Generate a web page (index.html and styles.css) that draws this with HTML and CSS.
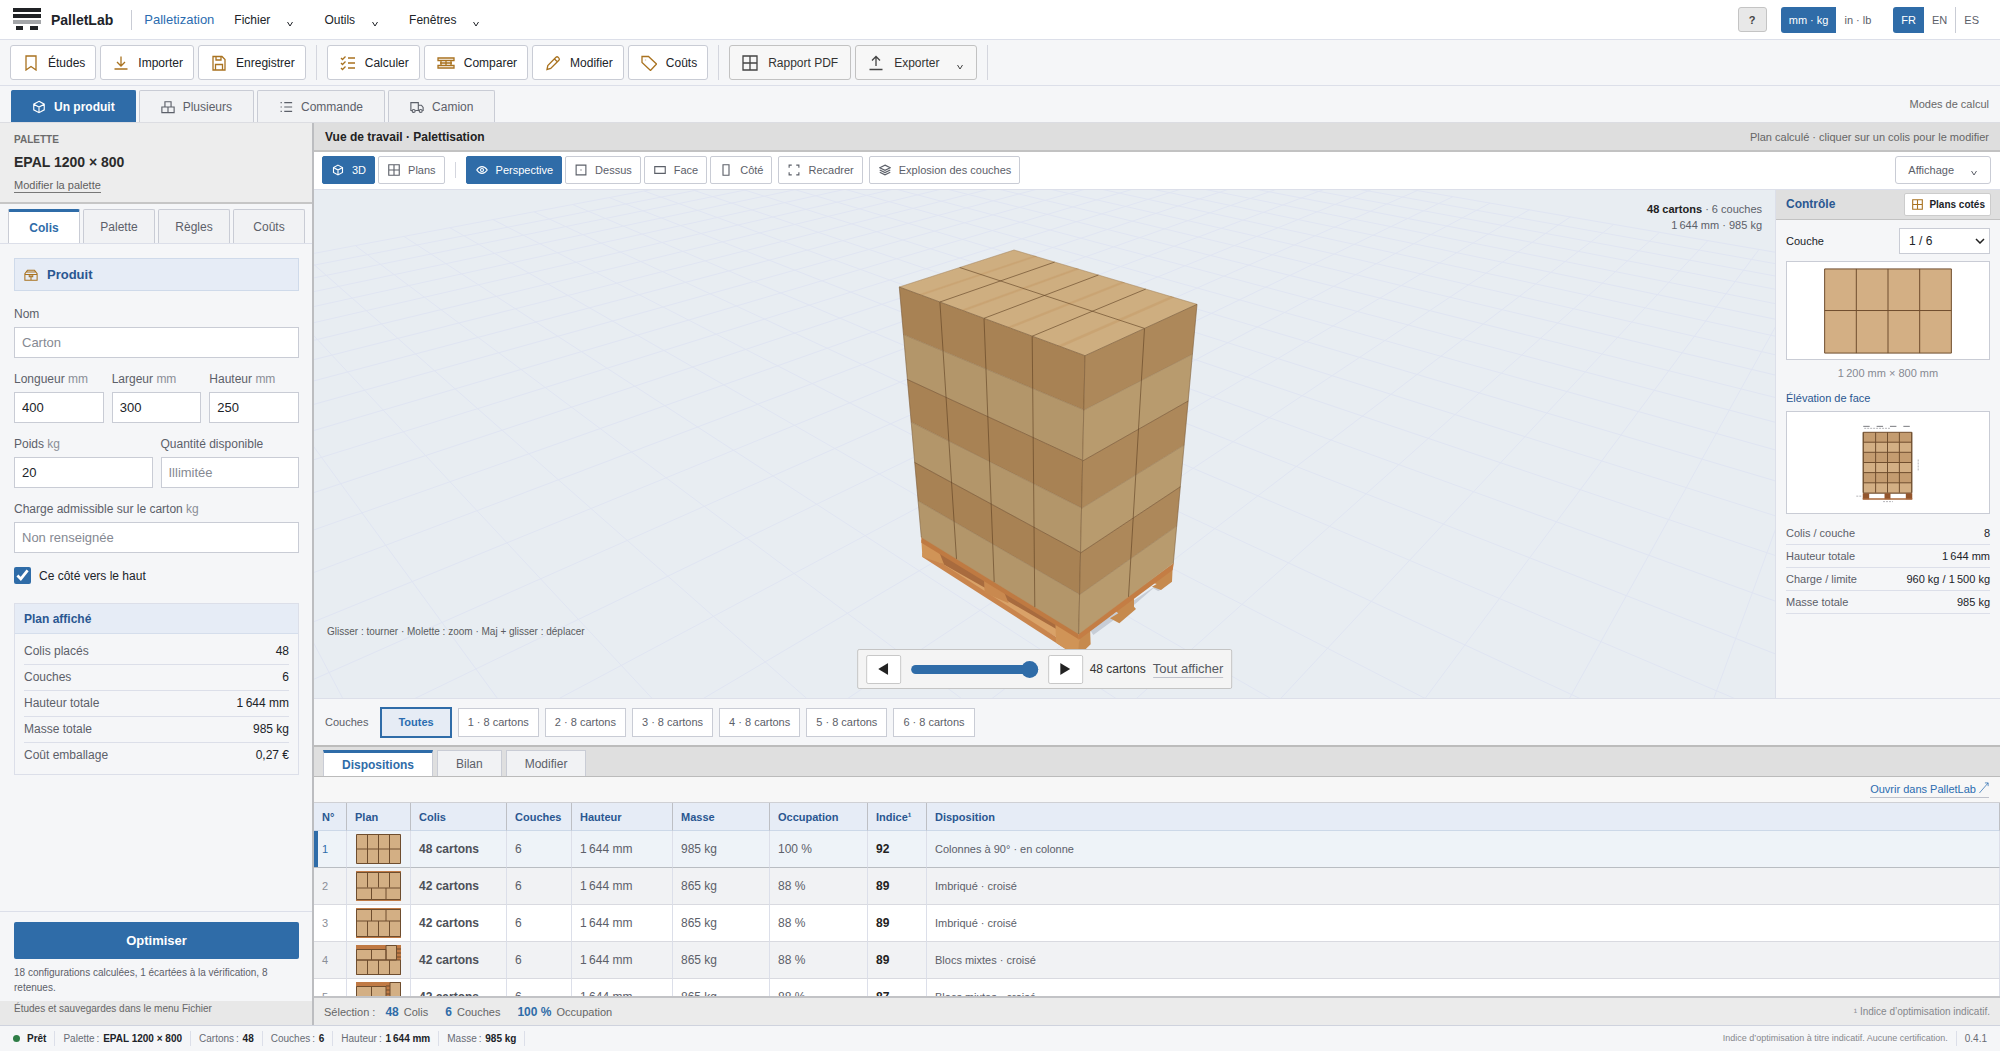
FILE: index.html
```html
<!DOCTYPE html>
<html lang="fr">
<head>
<meta charset="utf-8">
<meta name="viewport" content="width=device-width, initial-scale=1">
<title>PalletLab · Palletization</title>
<link rel="stylesheet" href="styles.css">
</head>
<body>
<svg class="sprite" aria-hidden="true">
  <symbol id="i-bookmark" viewBox="0 0 16 16"><path d="M3 1h10v14l-5-3.500L3 15z"/></symbol>
  <symbol id="i-import" viewBox="0 0 16 16"><path d="M8 1.500v9M4 7l4 4 4-4M1.500 14h13"/></symbol>
  <symbol id="i-save" viewBox="0 0 16 16"><path d="M2 1.500h9L14 4.500V15H2zM5 1.500V5h5V1.500M4.500 15V9.500h7V15"/></symbol>
  <symbol id="i-checks" viewBox="0 0 16 16"><path d="M1 3l1.500 1.500L5.500 1.500M1 8l1.500 1.500 3-3M1 13l1.500 1.500 3-3M8 3h7M8 8h7M8 13h7"/></symbol>
  <symbol id="i-compare" viewBox="0 0 18 16"><path d="M1 3h16v2.500H1zM1 10.500h16V13H1zM4 5.500v5M9 5.500v5M14 5.500v5M3 8h12"/></symbol>
  <symbol id="i-pencil" viewBox="0 0 16 16"><path d="M2 14.500l.8-4L11 2.300a1.500 1.500 0 0 1 2.100 0l.8.800a1.500 1.500 0 0 1 0 2.100L5.700 13.500zM9.500 4l2.800 2.800"/></symbol>
  <symbol id="i-tag" viewBox="0 0 16 16"><path d="M1 1.500h6.500L15.500 9l-6 6.500L1 7.500zM4.500 4.700v.5"/></symbol>
  <symbol id="i-grid" viewBox="0 0 16 16"><path d="M1 1h14v14H1zM8 1v14M1 8h14"/></symbol>
  <symbol id="i-export" viewBox="0 0 16 16"><path d="M8 11V2M4 5.500l4-4 4 4M1.500 14.500h13"/></symbol>
  <symbol id="i-cube" viewBox="0 0 16 16"><path d="M8 1.500l6 3.300v6.400l-6 3.300-6-3.300V4.800zM2 4.800L8 8l6-3.200M8 8v6.500"/></symbol>
  <symbol id="i-boxes" viewBox="0 0 16 16"><path d="M4.500 2h7v6h-7zM1 8h7v6.500H1zM8 8h7v6.500H8z"/></symbol>
  <symbol id="i-list" viewBox="0 0 16 16"><path d="M6 3h9M6 8h9M6 13h9M1.800 3h1.400M1.800 8h1.400M1.800 13h1.400"/></symbol>
  <symbol id="i-truck" viewBox="0 0 16 16"><path d="M2.500 12H1V3h8.500v9H6M9.500 6H13l2 2.500V12h-1M9.500 12h1"/><circle cx="4.200" cy="12.500" r="1.700"/><circle cx="12.200" cy="12.500" r="1.700"/></symbol>
  <symbol id="i-eye" viewBox="0 0 16 16"><path d="M1 8c2-3 4.300-4.500 7-4.500S13 5 15 8c-2 3-4.300 4.500-7 4.500S3 11 1 8z"/><circle cx="8" cy="8" r="2"/></symbol>
  <symbol id="i-top" viewBox="0 0 16 16"><path d="M1.500 1.500h13v13h-13zM7.200 8h1.600"/></symbol>
  <symbol id="i-front" viewBox="0 0 16 16"><path d="M1 3.500h14v9H1z"/></symbol>
  <symbol id="i-side" viewBox="0 0 16 16"><path d="M4 1h8v14H4z"/></symbol>
  <symbol id="i-frame" viewBox="0 0 16 16"><path d="M1.500 5V1.500H5M11 1.500h3.500V5M14.500 11v3.500H11M5 14.500H1.500V11"/></symbol>
  <symbol id="i-layers" viewBox="0 0 16 16"><path d="M8 1.500L15 5 8 8.500 1 5zM1 8l7 3.500L15 8M1 11l7 3.500 7-3.500"/></symbol>
  <symbol id="i-carton" viewBox="0 0 16 16"><path d="M4 2.500h8L15 6.500V14H1V6.500zM1 7.500h14M3 4.500h10M8 7.500V14M6 7.500V10h4V7.500"/></symbol>
  <symbol id="i-chev" viewBox="0 0 8 8"><path d="M1.500 2L4 6l2.500-4"/></symbol>
</svg>

<div class="app">
  <header class="menubar">
    <svg class="logo" viewBox="0 0 28 24" aria-hidden="true"><path fill="#202225" d="M0 0h28v4H0zM0 6h28v4H0zM3 18h7v4H3zM17 18h8v4h-8z"/><path fill="#a3a5a8" d="M0 12h28v4H0z"/></svg>
    <strong class="brand">PalletLab</strong>
    <span class="product">Palletization</span>
    <nav class="menus">
      <button type="button">Fichier<svg class="chev"><use href="#i-chev"/></svg></button>
      <button type="button">Outils<svg class="chev"><use href="#i-chev"/></svg></button>
      <button type="button">Fenêtres<svg class="chev"><use href="#i-chev"/></svg></button>
    </nav>
    <button type="button" class="help" aria-label="Aide">?</button>
    <div class="switch units"><button type="button" class="on">mm · kg</button><button type="button">in · lb</button></div>
    <div class="switch langs"><button type="button" class="on">FR</button><button type="button">EN</button><button type="button" class="ruled">ES</button></div>
  </header>

  <div class="toolbar">
    <button type="button" class="tool"><svg><use href="#i-bookmark"/></svg>Études</button>
    <button type="button" class="tool"><svg><use href="#i-import"/></svg>Importer</button>
    <button type="button" class="tool"><svg><use href="#i-save"/></svg>Enregistrer</button>
    <span class="rule"></span>
    <button type="button" class="tool"><svg><use href="#i-checks"/></svg>Calculer</button>
    <button type="button" class="tool"><svg class="wide"><use href="#i-compare"/></svg>Comparer</button>
    <button type="button" class="tool"><svg><use href="#i-pencil"/></svg>Modifier</button>
    <button type="button" class="tool"><svg><use href="#i-tag"/></svg>Coûts</button>
    <span class="rule"></span>
    <button type="button" class="tool plain"><svg><use href="#i-grid"/></svg>Rapport PDF</button>
    <button type="button" class="tool plain"><svg><use href="#i-export"/></svg>Exporter<svg class="chev"><use href="#i-chev"/></svg></button>
    <span class="rule"></span>
  </div>

  <div class="modes">
    <button type="button" class="mode on"><svg><use href="#i-cube"/></svg>Un produit</button>
    <button type="button" class="mode"><svg><use href="#i-boxes"/></svg>Plusieurs</button>
    <button type="button" class="mode"><svg><use href="#i-list"/></svg>Commande</button>
    <button type="button" class="mode"><svg><use href="#i-truck"/></svg>Camion</button>
    <span class="modes-note">Modes de calcul</span>
  </div>

  <div class="body">
    <aside class="side">
      <section class="pallet-head">
        <span class="over">PALETTE</span>
        <strong>EPAL 1200 × 800</strong>
        <a href="#palette">Modifier la palette</a>
      </section>
      <div class="side-tabs">
        <button type="button" class="on">Colis</button><button type="button">Palette</button><button type="button">Règles</button><button type="button">Coûts</button>
      </div>
      <form class="form">
        <h2><svg><use href="#i-carton"/></svg>Produit</h2>
        <div class="field"><label for="nom">Nom</label><input id="nom" type="text" placeholder="Carton"></div>
        <div class="fields">
          <div class="field"><label for="lon">Longueur <small>mm</small></label><input id="lon" type="text" value="400"></div>
          <div class="field"><label for="lar">Largeur <small>mm</small></label><input id="lar" type="text" value="300"></div>
          <div class="field"><label for="hau">Hauteur <small>mm</small></label><input id="hau" type="text" value="250"></div>
        </div>
        <div class="fields">
          <div class="field"><label for="poi">Poids <small>kg</small></label><input id="poi" type="text" value="20"></div>
          <div class="field"><label for="qte">Quantité disponible</label><input id="qte" type="text" placeholder="Illimitée"></div>
        </div>
        <div class="field"><label for="chg">Charge admissible sur le carton <small>kg</small></label><input id="chg" type="text" placeholder="Non renseignée"></div>
        <label class="check"><input type="checkbox" checked>Ce côté vers le haut</label>
        <section class="summary">
          <h3>Plan affiché</h3>
          <dl class="stats">
            <div><dt>Colis placés</dt><dd>48</dd></div>
            <div><dt>Couches</dt><dd>6</dd></div>
            <div><dt>Hauteur totale</dt><dd>1&#8239;644 mm</dd></div>
            <div><dt>Masse totale</dt><dd>985 kg</dd></div>
            <div><dt>Coût emballage</dt><dd>0,27 €</dd></div>
          </dl>
        </section>
      </form>
      <div class="side-foot">
        <button type="button" class="primary">Optimiser</button>
        <p>18 configurations calculées, 1 écartées à la vérification, 8 retenues.</p>
      </div>
      <p class="side-note">Études et sauvegardes dans le menu Fichier</p>
    </aside>

    <main class="main">
      <div class="work-head"><h1>Vue de travail · Palettisation</h1><span>Plan calculé · cliquer sur un colis pour le modifier</span></div>
      <div class="viewbar">
        <button type="button" class="on"><svg><use href="#i-cube"/></svg>3D</button>
        <button type="button"><svg><use href="#i-grid"/></svg>Plans</button>
        <span class="rule"></span>
        <button type="button" class="on"><svg><use href="#i-eye"/></svg>Perspective</button>
        <button type="button"><svg><use href="#i-top"/></svg>Dessus</button>
        <button type="button"><svg><use href="#i-front"/></svg>Face</button>
        <button type="button"><svg><use href="#i-side"/></svg>Côté</button>
        <button type="button" class="apart"><svg><use href="#i-frame"/></svg>Recadrer</button>
        <button type="button" class="apart"><svg><use href="#i-layers"/></svg>Explosion des couches</button>
        <button type="button" class="display">Affichage<svg class="chev"><use href="#i-chev"/></svg></button>
      </div>

      <div class="stage">
        <div class="view">
          <svg class="scene" viewBox="0 0 1461 508" preserveAspectRatio="xMidYMid slice" role="img" aria-label="Palette chargée en perspective">
            <path id="floor" fill="none" stroke="#e0e5f2" stroke-width="1"/>
            <g transform="translate(546 40) scale(.33333)">
              <path fill="#c7cdd6" d="M690 1200L935 1035 905 1078 830 1120 700 1215z"/>
              <path fill="#e8edf2" d="M770 1170L880 1075 905 1090 830 1140z"/>
              <path fill="#a86b3e" d="M184 930L656 1215V1250L250 1010z"/>
              <path fill="#d9a268" d="M250 1003L372 1072 590 1198V1222L430 1128 240 1010z"/>
              <path fill="#c9854d" d="M187 968L250 1003 590 1222 640 1262H625L187 981z"/>
              <path fill="#d09457" d="M184 930L236 962 252 1003 187 980z"/>
              <path fill="#c9894f" d="M372 1050L432 1085 446 1120 374 1088z"/>
              <path fill="#d09457" d="M586 1170L658 1215V1262H625L588 1238z"/>
              <path fill="#c68a4e" d="M658 1222L690 1190 692 1243 672 1262H655z"/>
              <path fill="#c68a4e" d="M762 1140L822 1098V1130L828 1137 778 1180 750 1165 775 1150z"/>
              <path fill="#c68a4e" d="M878 1058L938 1012 936 1055 903 1080 876 1070 890 1062z"/>
              <path fill="#bf7a42" d="M184 918L656 1210 656 1228 184 938z"/>
              <path fill="#c47d44" d="M656 1206L942 998 938 1020 656 1230z"/>
            </g>
            <g id="load"></g>
          </svg>
          <p class="readout"><strong>48 cartons</strong> · 6 couches<br>1&#8239;644 mm · 985 kg</p>
          <p class="hint">Glisser : tourner · Molette : zoom · Maj + glisser : déplacer</p>
          <div class="player">
            <button type="button" aria-label="Précédent"><svg viewBox="0 0 10 12"><path d="M10 0v12L0 6z"/></svg></button>
            <input type="range" min="0" max="48" value="48" aria-label="Cartons affichés">
            <button type="button" aria-label="Suivant"><svg viewBox="0 0 10 12"><path d="M0 0v12l10-6z"/></svg></button>
            <span>48 cartons</span>
            <a href="#tout">Tout afficher</a>
          </div>
        </div>

        <aside class="control">
          <div class="control-head"><h2>Contrôle</h2><button type="button"><svg><use href="#i-grid"/></svg>Plans cotés</button></div>
          <div class="control-body">
            <div class="pick"><label for="couche">Couche</label><span class="select"><select id="couche"><option>1 / 6</option></select><svg viewBox="0 0 10 6"><path d="M1 1l4 4 4-4"/></svg></span></div>
            <div class="figure"><svg viewBox="0 0 204 98" aria-hidden="true"><g fill="#d3af84" stroke="#6e4d2e"><path d="M38 7h128v85H38z"/><path d="M70 7v85M102 7v85M134 7v85M38 49h128"/></g></svg></div>
            <p class="caption">1&#8239;200 mm × 800 mm</p>
            <h3>Élévation de face</h3>
            <div class="figure"><svg viewBox="0 0 204 102" aria-hidden="true">
              <path d="M77 14.500h48" stroke="#77797e" stroke-width="1" stroke-dasharray="6.500 7"/>
              <path d="M78 16.500h26M132.500 48v12M70 85h6M97 90.500h10" stroke="#b4b4b8" stroke-width="1" stroke-dasharray="2 1"/>
              <path fill="#c49c70" stroke="#6e4d2e" d="M77 20.500h49v61H77z"/>
              <path fill="#d3af84" d="M77.500 31h48v10h-48zM77.500 51h48v10h-48zM77.500 71.500h48v10h-48z"/>
              <path stroke="#6e4d2e" d="M77 20.500v61M89.500 20.500v61M101.500 20.500v61M113.500 20.500v61M126 20.500v61M77 30.500h49M77 40.700h49M77 51h49M77 61.200h49M77 71.500h49M77 82h49"/>
              <path fill="#93552c" d="M76.500 82h6.500v6h-6.500zM98.500 82h6v6h-6zM120 82h6.500v6H120z"/><path fill="#a8673a" d="M76.500 87h50v1.500h-50z"/>
            </svg></div>
            <dl class="stats">
              <div><dt>Colis / couche</dt><dd>8</dd></div>
              <div><dt>Hauteur totale</dt><dd>1&#8239;644 mm</dd></div>
              <div><dt>Charge / limite</dt><dd>960 kg / 1&#8239;500 kg</dd></div>
              <div><dt>Masse totale</dt><dd>985 kg</dd></div>
            </dl>
          </div>
        </aside>
      </div>

      <div class="layers">
        <span>Couches</span>
        <button type="button" class="on">Toutes</button>
        <button type="button">1 · 8 cartons</button><button type="button">2 · 8 cartons</button><button type="button">3 · 8 cartons</button><button type="button">4 · 8 cartons</button><button type="button">5 · 8 cartons</button><button type="button">6 · 8 cartons</button>
      </div>
      <div class="result-tabs"><button type="button" class="on">Dispositions</button><button type="button">Bilan</button><button type="button">Modifier</button></div>
      <div class="open-row"><a href="#ouvrir">Ouvrir dans PalletLab <svg viewBox="0 0 10 12" aria-hidden="true"><path d="M0 12L9.500 1M6 1h3.500v3.500"/></svg></a></div>
      <div class="table-box">
        <table>
          <colgroup><col class="c-num"><col class="c-plan"><col class="c-colis"><col class="c-couches"><col class="c-hauteur"><col class="c-masse"><col class="c-occ"><col class="c-ind"><col></colgroup>
          <thead><tr><th>N°</th><th>Plan</th><th>Colis</th><th>Couches</th><th>Hauteur</th><th>Masse</th><th>Occupation</th><th>Indice¹</th><th>Disposition</th></tr></thead>
          <tbody>
            <tr class="on"><td>1</td><td><svg class="thumb" viewBox="0 0 45 30"><path class="bx" d="M.5.500h44v29H.5zM11.500.500v29M22.500.500v29M33.500.500v29M.5 15h44"/></svg></td><td>48 cartons</td><td>6</td><td>1&#8239;644 mm</td><td>985 kg</td><td>100 %</td><td>92</td><td>Colonnes à 90° · en colonne</td></tr>
            <tr><td>2</td><td><svg class="thumb" viewBox="0 0 45 30"><path class="wd" d="M0 0h45v30H0z"/><path class="bx" d="M.5 1.500h44v27H.5zM11.500 1.500v15M22.500 1.500v15M33.500 1.500v15M.5 17h44M15.500 17v11M30 17v11"/></svg></td><td>42 cartons</td><td>6</td><td>1&#8239;644 mm</td><td>865 kg</td><td>88 %</td><td>89</td><td>Imbriqué · croisé</td></tr>
            <tr><td>3</td><td><svg class="thumb" viewBox="0 0 45 30"><path class="wd" d="M0 0h45v30H0z"/><path class="bx" d="M.5 1.500h44v27H.5zM11.500 13v15M22.500 13v15M33.500 13v15M.5 13h44M15.500 2v11M30 2v11"/></svg></td><td>42 cartons</td><td>6</td><td>1&#8239;644 mm</td><td>865 kg</td><td>88 %</td><td>89</td><td>Imbriqué · croisé</td></tr>
            <tr><td>4</td><td><svg class="thumb" viewBox="0 0 45 30"><path class="wd" d="M0 0h45v30H0z"/><path class="bx" d="M.5 4.500h29.500v10.500H.5zM30 .500h10.500V15H30zM15.500 4.500V15M.5 15h44v14.500H.5zM11.500 15v14.500M22.500 15v14.500M33.500 15v14.500"/><path class="ln" d="M41 4h4M41 8h4M41 12h4"/></svg></td><td>42 cartons</td><td>6</td><td>1&#8239;644 mm</td><td>865 kg</td><td>88 %</td><td>89</td><td>Blocs mixtes · croisé</td></tr>
            <tr><td>5</td><td><svg class="thumb" viewBox="0 0 45 30"><path class="wd" d="M0 0h45v30H0z"/><path class="bx" d="M.5 4.500h29.500v10.500H.5zM34 .500h10.500V15H34zM15.500 4.500V15M.5 15h44v14.500H.5zM11.500 15v14.500M22.500 15v14.500M33.500 15v14.500"/><path class="ln" d="M30 4h4M30 8h4M30 12h4"/></svg></td><td>42 cartons</td><td>6</td><td>1&#8239;644 mm</td><td>865 kg</td><td>88 %</td><td>87</td><td>Blocs mixtes · croisé</td></tr>
          </tbody>
        </table>
      </div>
      <div class="selection"><span class="lead">Sélection :</span><span><b>48</b> Colis</span><span><b>6</b> Couches</span><span><b>100 %</b> Occupation</span><small>¹ Indice d’optimisation indicatif.</small></div>
    </main>
  </div>

  <footer class="status">
    <span class="ready"><i></i><b>Prêt</b></span>
    <span>Palette&#8239;: <b>EPAL 1200 × 800</b></span>
    <span>Cartons&#8239;: <b>48</b></span>
    <span>Couches&#8239;: <b>6</b></span>
    <span>Hauteur&#8239;: <b>1&#8239;644 mm</b></span>
    <span>Masse&#8239;: <b>985 kg</b></span>
    <span class="legal">Indice d’optimisation à titre indicatif. Aucune certification.</span>
    <span class="version">0.4.1</span>
  </footer>
</div>
<script src="scene.js"></script>
</body>
</html>
```
FILE: scene.js
```js
// Floor grid: homogeneous point = far corner + steps toward the two vanishing points.
const corner = [700, -69, 1];
const vanishLeft = [-373, -254, 1];
const vanishRight = [1678, -254, 1];
const stepLeft = -0.017074;
const stepRight = -0.018293;

function floorPoint(i, j) {
  const [x, y, w] = corner.map((c, k) => c + i * stepLeft * vanishLeft[k] + j * stepRight * vanishRight[k]);
  return `${(x / w).toFixed(1)} ${(y / w).toFixed(1)}`;
}

let floor = '';
for (let n = 0; n < 46; n++) {
  const iMax = (0.92 + n * stepRight) / -stepLeft;
  const jMax = (0.92 + n * stepLeft) / -stepRight;
  if (iMax > 0) floor += `M${floorPoint(0, n)}L${floorPoint(iMax, n)}`;
  if (jMax > 0) floor += `M${floorPoint(n, 0)}L${floorPoint(n, jMax)}`;
}
document.getElementById('floor').setAttribute('d', floor);

// Maps the unit square onto a face given by its corners (0,0) (1,0) (1,1) (0,1).
function face(a, b, c, d) {
  const sx = a[0] - b[0] + c[0] - d[0], sy = a[1] - b[1] + c[1] - d[1];
  const dx1 = b[0] - c[0], dx2 = d[0] - c[0], dy1 = b[1] - c[1], dy2 = d[1] - c[1];
  const det = dx1 * dy2 - dx2 * dy1;
  const g = (sx * dy2 - dx2 * sy) / det, h = (dx1 * sy - sx * dy1) / det;
  return (u, v) => {
    const w = g * u + h * v + 1;
    const x = ((b[0] - a[0] + g * b[0]) * u + (d[0] - a[0] + h * d[0]) * v + a[0]) / w;
    const y = ((b[1] - a[1] + g * b[1]) * u + (d[1] - a[1] + h * d[1]) * v + a[1]) / w;
    return `${x.toFixed(1)} ${y.toFixed(1)}`;
  };
}

const quad = (f, u0, v0, u1, v1, fill) =>
  `<path fill="${fill}" stroke="${fill}" stroke-width=".4" d="M${f(u0, v0)}L${f(u1, v0)} ${f(u1, v1)} ${f(u0, v1)}z"/>`;
const line = (f, u0, v0, u1, v1, alpha) =>
  `<path stroke="#5d3f22" stroke-opacity="${alpha}" stroke-width="1" d="M${f(u0, v0)}L${f(u1, v1)}"/>`;

const leftTop = [585.3, 97], nearTop = [771, 165.7], rightTop = [883, 114.3], backTop = [700, 60];
const leftLow = [607.3, 347.3], nearLow = [764.7, 444], rightLow = [859.3, 373.3];

const faces = [
  { f: face(leftTop, nearTop, nearLow, leftLow), cols: 4, dark: '#a88254', light: '#b3966a' },
  { f: face(nearTop, rightTop, rightLow, nearLow), cols: 2, dark: '#ad885a', light: '#b89b6e' },
];
let out = '';
for (const { f, cols, dark, light } of faces) {
  for (let r = 0; r < 6; r++) out += quad(f, 0, r / 6, 1, (r + 1) / 6, r % 2 ? light : dark);
  for (let r = 1; r < 6; r++) out += line(f, 0, r / 6, 1, r / 6, r % 2 ? 0.2 : 0.45);
  for (let c = 0; c <= cols; c++) out += line(f, c / cols, 0, c / cols, 1, c === 0 || c === cols ? 0.35 : 0.6);
}
const lid = face(leftTop, nearTop, rightTop, backTop);
out += quad(lid, 0, 0, 1, 1, '#ceae80');
for (let c = 0; c < 4; c++) out += quad(lid, (c + 0.5) / 4, 0, (c + 0.56) / 4, 1, '#c9a473');
for (let c = 1; c < 4; c++) out += line(lid, c / 4, 0, c / 4, 1, 0.6);
out += line(lid, 0, 0.5, 1, 0.5, 0.6) + line(lid, 0, 0, 1, 0, 0.5) + line(lid, 1, 0, 1, 1, 0.5);
out += line(lid, 0, 0, 0, 1, 0.2) + line(lid, 0, 1, 1, 1, 0.2);
document.getElementById('load').innerHTML = out;
```
FILE: styles.css
```css
:root {
  --blue: #2f6ca8;
  --heading: #2a5791;
  --link: #2b6cb0;
  --bg: #f5f6f8;
  --line: #dcdfe9;
  --ctl: #c9ccd5;
  --text: #202328;
  --muted: #5c6069;
  --amber: #a9721f;
}
* { box-sizing: border-box; }
body { margin: 0; font-family: "Liberation Sans", Arial, sans-serif; font-size: 12px; color: var(--text); background: var(--bg); }
h1, h2, h3, p, dl, dd { margin: 0; }
button, input, select { font: inherit; color: inherit; margin: 0; }
button { padding: 0; border: 0; background: none; white-space: nowrap; cursor: pointer; }
button svg, h2 svg { width: 14px; height: 14px; fill: none; stroke: currentColor; stroke-width: 1.3; flex: none; }
.sprite { display: none; }
button .chev { width: 8px; height: 8px; stroke-width: 1; }
.app { display: grid; grid-template-rows: auto auto auto minmax(0, 1fr) auto; height: 100vh; min-height: 860px; }

.menubar { display: flex; align-items: center; height: 40px; padding: 0 13px; background: #fff; border-bottom: 1px solid var(--line); }
.logo { width: 28px; height: 24px; margin-right: 10px; }
.brand { font-size: 14px; padding-right: 18px; }
.product { font-size: 13px; line-height: 20px; color: var(--link); border-left: 1px solid var(--ctl); padding-left: 12px; }
.menus { display: flex; gap: 30px; margin-left: 20px; flex: 1; }
.menus button { display: flex; align-items: center; gap: 16px; }
.menus .chev { position: relative; top: 4px; }
.help { width: 29px; height: 25px; background: #e8e8e8; border: 1px solid #c4c4c4; border-radius: 3px; font-size: 11px; font-weight: bold; color: #444; }
.switch { display: flex; height: 26px; font-size: 11px; color: var(--muted); }
.switch button { padding: 0 8px; }
.switch .on { background: var(--blue); color: #fff; border-radius: 3px 0 0 3px; }
.switch .ruled { border-left: 1px solid var(--ctl); }
.units { margin: 0 14px; }

.toolbar { display: flex; align-items: center; gap: 4px; height: 46px; padding: 0 10px; border-bottom: 1px solid var(--line); }
.tool { display: flex; align-items: center; gap: 9px; height: 35px; padding: 0 10px 0 12px; background: #fff; border: 1px solid var(--ctl); border-radius: 3px; }
.tool svg { width: 16px; height: 16px; stroke: var(--amber); }
.tool .wide { width: 18px; }
.tool.plain { gap: 10px; padding: 0 12px; background: #f7f7f7; border-color: #c2c2c2; color: #333; }
.tool.plain svg { stroke: #444; }
.tool .chev { width: 8px; height: 8px; margin-left: 6px; position: relative; top: 4px; }
.rule { width: 1px; height: 35px; margin: 0 6px; background: #d4d6de; }

.modes { display: flex; align-items: flex-end; gap: 3px; height: 37px; padding: 0 11px; border-bottom: 1px solid #dcdde2; }
.mode { display: flex; align-items: center; gap: 8px; height: 32px; padding: 0 21px; background: #f1f2f4; border: 1px solid var(--ctl); border-bottom: 0; border-radius: 2px 2px 0 0; color: var(--muted); }
.mode.on { padding: 0 20px; background: var(--blue); border-color: var(--blue); color: #fff; font-weight: bold; }
.modes-note { margin-left: auto; align-self: center; font-size: 11px; color: #686868; }

.body { display: grid; grid-template-columns: 314px minmax(0, 1fr); min-height: 0; }
.side { display: flex; flex-direction: column; border-right: 2px solid #bcbdc0; min-height: 0; }
.pallet-head { display: flex; flex-direction: column; align-items: flex-start; height: 81px; padding: 11px 14px 0; background: #ededed; border-bottom: 2px solid #c6c6c6; color: #666; }
.over { font-size: 10px; line-height: 12px; font-weight: bold; color: #6b6b6b; }
.pallet-head strong { font-size: 14px; line-height: 16px; margin: 8px 0; color: #2b2b2b; }
.pallet-head a { font-size: 11px; line-height: 14px; color: #5f5f5f; text-decoration: none; border-bottom: 1px solid #777; }
.side-tabs { display: grid; grid-template-columns: repeat(4, 1fr); gap: 3px; padding: 5px 7px 0 8px; border-bottom: 1px solid var(--line); }
.side-tabs button { height: 34px; background: #f1f2f4; border: 1px solid var(--ctl); border-bottom: 0; border-radius: 2px 2px 0 0; color: var(--muted); }
.side-tabs .on, .result-tabs .on { background: #fff; border-top: 3px solid var(--blue); color: var(--blue); font-weight: bold; }

.form { flex: 1; min-height: 0; overflow: hidden; padding: 14px 13px 0 14px; }
.form h2 { display: flex; align-items: center; gap: 9px; height: 33px; margin-bottom: 16px; padding: 0 9px; background: #e6ecf6; border: 1px solid #cfdaea; font-size: 13px; color: var(--heading); }
.form h2 svg { stroke: var(--amber); stroke-width: 1.2; }
.fields { display: flex; gap: 8px; }
.field { display: flex; flex: 1; flex-direction: column; gap: 6px; min-width: 0; margin-bottom: 14px; }
.field label { line-height: 14px; color: var(--muted); }
.field small { font-size: 12px; color: #8a8e97; }
.field input { width: 100%; height: 31px; padding: 0 7px; background: #fff; border: 1px solid var(--ctl); font-size: 13px; }
.field input::placeholder { color: #858992; }
.check { display: flex; align-items: center; gap: 8px; line-height: 16px; }
.check input { width: 17px; height: 17px; accent-color: var(--blue); }
.summary { margin-top: 19px; border: 1px solid var(--line); }
.summary h3 { height: 30px; padding: 0 9px; line-height: 30px; font-size: 12px; color: var(--heading); background: #e6ecf6; border-bottom: 1px solid #d5deec; }
.stats div { display: flex; justify-content: space-between; border-bottom: 1px solid var(--line); }
.stats dt { color: var(--muted); }
.summary .stats { padding: 5px 9px; }
.summary .stats div { line-height: 25px; height: 26px; }
.summary .stats div:last-child { border-bottom: 0; }
.side-foot { height: 90px; padding: 10px 13px 0 14px; border-top: 1px solid var(--line); }
.primary { width: 100%; height: 37px; background: var(--blue); border-radius: 2px; color: #fff; font-size: 13px; font-weight: bold; }
.side-foot p { margin-top: 6px; font-size: 10px; line-height: 15px; color: var(--muted); }
.side-note { height: 24px; padding: 0 14px; background: #e8e8e8; font-size: 10px; line-height: 15px; color: #666; }

.main { display: flex; flex-direction: column; min-width: 0; min-height: 0; }
.work-head { display: flex; align-items: center; justify-content: space-between; height: 29px; padding: 0 11px; background: #dedede; border-bottom: 2px solid #c2c2c2; font-size: 11px; color: #666; }
.work-head h1 { font-size: 12px; color: #222; }
.viewbar { display: flex; align-items: center; gap: 3px; height: 38px; padding: 0 9px 1px 8px; background: #fff; border-bottom: 1px solid var(--line); }
.viewbar button { display: flex; align-items: center; gap: 8px; height: 28px; padding: 0 8px 0 9px; background: #fff; border: 1px solid var(--ctl); border-radius: 2px; font-size: 11px; color: var(--muted); }
.viewbar svg { width: 12px; height: 12px; stroke-width: 1.5; }
.viewbar .on { background: var(--blue); border-color: var(--blue); color: #fff; }
.viewbar .rule { height: 16px; margin: 0 7px; }
.viewbar .apart { margin-left: 3px; }
.viewbar .display { margin-left: auto; gap: 16px; padding: 0 12px; border-radius: 3px; }
.viewbar .chev { width: 8px; height: 8px; position: relative; top: 3px; stroke-width: 1; }

.stage { display: grid; grid-template-columns: minmax(0, 1fr) 225px; flex: 1; min-height: 0; }
.view { position: relative; min-height: 0; background: #e8edf2; overflow: hidden; }
.scene { position: absolute; inset: 0; width: 100%; height: 100%; }
.readout { position: absolute; top: 11px; right: 13px; font-size: 11px; line-height: 16px; text-align: right; color: var(--muted); }
.readout strong { color: #222; }
.hint { position: absolute; left: 13px; bottom: 59px; font-size: 10px; line-height: 14px; color: #5a5c60; }
.player { position: absolute; left: 50%; bottom: 9px; transform: translateX(-50%); display: flex; align-items: center; gap: 7px; height: 40px; padding: 0 8px; background: #f4f4f4; border: 1px solid #c4c4c4; border-radius: 2px; white-space: nowrap; color: #333; }
.player button { display: grid; place-items: center; width: 35px; height: 29px; background: #fff; border: 1px solid #c8c8c8; border-radius: 2px; }
.player button svg { width: 10px; height: 12px; fill: #222; stroke: none; }
.player a { font-size: 13px; line-height: 17px; color: #555961; text-decoration: none; border-bottom: 1px solid #bfc2cb; }
.player input { appearance: none; width: 127px; height: 17px; margin: 0 3px; background: none; }
.player input::-webkit-slider-runnable-track { height: 9px; border-radius: 5px; background: var(--blue); }
.player input::-webkit-slider-thumb { appearance: none; width: 17px; height: 17px; margin-top: -4px; border-radius: 50%; background: var(--blue); }

.control { border-left: 1px solid var(--line); font-size: 11px; min-height: 0; overflow: hidden; }
.control-head { display: flex; align-items: center; justify-content: space-between; height: 30px; padding: 0 9px 1px 10px; background: #dfdfdf; border-bottom: 1px solid #c2c2c2; }
.control-head h2 { font-size: 12px; color: var(--heading); }
.control-head button { display: flex; align-items: center; gap: 6px; height: 23px; padding: 0 5px 0 7px; background: #fff; border: 1px solid #ccc; border-radius: 2px; font-size: 10px; font-weight: bold; }
.control-head svg { width: 11px; height: 11px; stroke: var(--amber); stroke-width: 1.6; }
.control-body { padding: 8px 10px; }
.pick { display: flex; align-items: center; justify-content: space-between; margin-bottom: 7px; }
.select { position: relative; }
.select select { display: block; appearance: none; width: 91px; height: 26px; padding: 0 9px; background: #fff; border: 1px solid var(--ctl); border-radius: 0; font-size: 12px; }
.select svg { position: absolute; right: 5px; top: 10px; width: 10px; height: 6px; fill: none; stroke: #222; stroke-width: 1.5; pointer-events: none; }
.figure { background: #fff; border: 1px solid var(--ctl); }
.figure svg { display: block; width: 100%; }
.caption { padding-top: 5px; line-height: 16px; text-align: center; color: #858992; }
.control h3 { margin: 9px 0 5px; font-size: 11px; font-weight: normal; line-height: 16px; color: var(--heading); }
.control .stats { margin-top: 8px; }
.control .stats div { height: 23px; line-height: 23px; }

.layers { display: flex; align-items: center; gap: 6px; height: 49px; padding: 0 11px; border-top: 1px solid var(--line); border-bottom: 2px solid #bcbcbc; font-size: 11px; color: var(--muted); }
.layers button { height: 29px; padding: 0 9px; background: #fff; border: 1px solid var(--ctl); }
.layers .on { height: 31px; margin-left: 6px; padding: 0 16px; background: #e6ecf5; border: 2px solid var(--blue); color: var(--link); font-weight: bold; }
.result-tabs { display: flex; align-items: flex-end; gap: 4px; height: 30px; padding: 0 9px; background: #dfdfdf; border-bottom: 1px solid #bbb; }
.result-tabs button { height: 26px; padding: 0 18px; background: #f1f2f4; border: 1px solid var(--ctl); border-bottom: 0; color: var(--muted); }
.open-row { display: flex; justify-content: flex-end; align-items: center; height: 25px; padding: 0 11px; background: #f7f7f7; }
.open-row a { font-size: 11px; line-height: 15px; color: var(--link); text-decoration: none; border-bottom: 1px solid #bfc2cb; }
.open-row svg { width: 10px; height: 11px; fill: none; stroke: currentColor; stroke-width: .8; }
.table-box { height: 194px; overflow: hidden auto; scrollbar-width: none; background: #fff; border-top: 1px solid #cfd0d4; }
table { width: 100%; table-layout: fixed; border-collapse: separate; border-spacing: 0; }
.c-num { width: 33px; } .c-plan { width: 64px; } .c-colis { width: 96px; } .c-couches { width: 65px; } .c-hauteur { width: 101px; } .c-masse { width: 97px; } .c-occ { width: 98px; } .c-ind { width: 59px; }
th { height: 28px; padding: 0 8px; text-align: left; font-size: 11px; color: var(--heading); background: #e6ecf6; border-right: 1px solid #bdbfc4; border-bottom: 1px solid #ccd8e8; white-space: nowrap; }
td { height: 37px; padding: 0 8px; color: var(--muted); border-right: 1px solid var(--line); border-bottom: 1px solid #d9dae0; white-space: nowrap; }
td:nth-child(1) { font-size: 11px; color: #8a8e97; }
td:nth-child(3) { font-weight: bold; color: #4d5058; }
td:nth-child(8) { font-weight: bold; color: #222; }
td:nth-child(9) { font-size: 11px; }
tbody tr:nth-child(even) td { background: #f1f2f4; }
tbody .on td { background: #eef3f8; border-bottom-color: #b9bdc2; }
tbody .on td:first-child { box-shadow: inset 4px 0 var(--blue); color: var(--blue); }
.thumb { display: block; width: 45px; height: 30px; margin-left: 1px; stroke: #6e4d2e; }
.bx { fill: #d3af84; }
.wd { fill: #c07a45; stroke: none; }
.ln { fill: none; }
.selection { display: flex; align-items: center; gap: 17px; height: 29px; padding: 0 10px; background: #ebebeb; border-top: 2px solid #c2c3c6; font-size: 11px; color: #666; }
.selection b { margin-right: 2px; font-size: 12px; color: var(--blue); }
.selection .lead { margin-right: -7px; }
.selection small { margin-left: auto; font-size: 10px; color: #85878c; }

.status { display: flex; align-items: center; height: 26px; padding: 0 13px; border-top: 1px solid #cfd3de; font-size: 10px; color: #686c75; }
.status span { line-height: 15px; padding: 0 8px; border-right: 1px solid var(--line); }
.status b { margin-left: 1px; color: #202328; }
.status .ready { display: flex; align-items: center; gap: 6px; padding-left: 0; }
.status i { width: 7px; height: 7px; border-radius: 50%; background: #2e7d46; }
.status .legal { margin-left: auto; font-size: 9px; color: #85878c; }
.status .version { border-right: 0; padding-right: 0; }
```
